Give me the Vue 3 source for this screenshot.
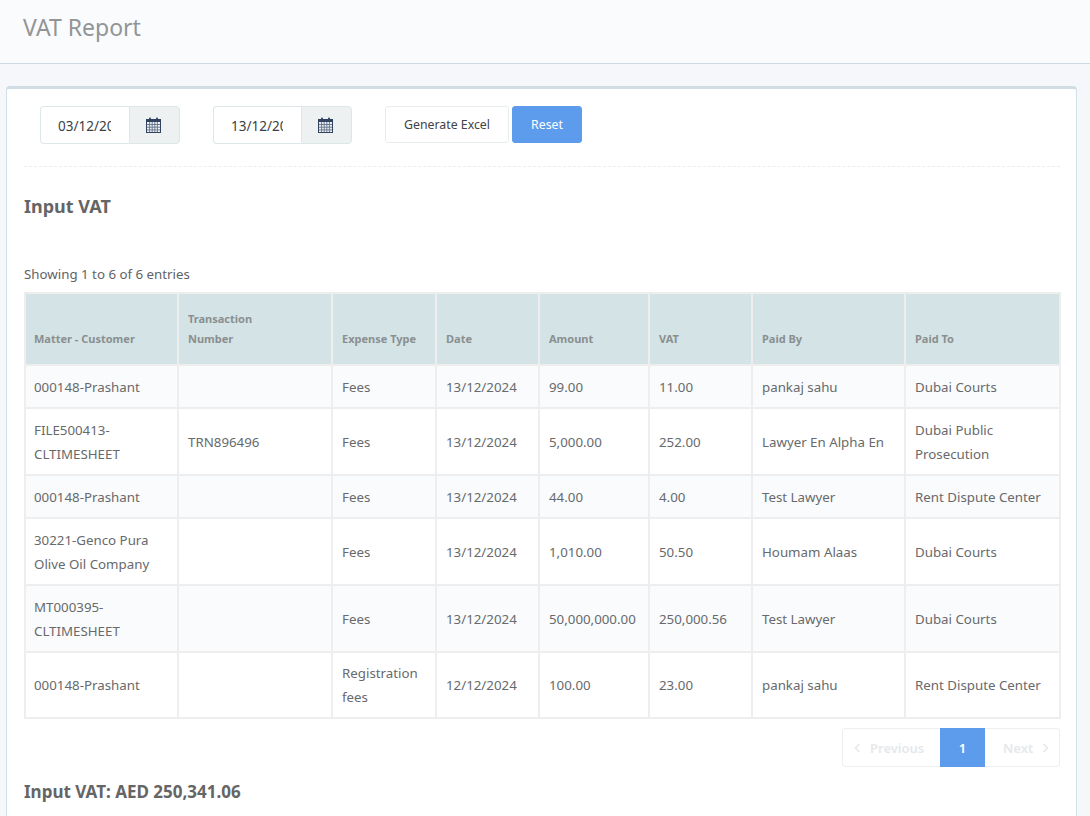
<script setup>
const rows = [
  ['000148-Prashant', '', 'Fees', '13/12/2024', '99.00', '11.00', 'pankaj sahu', 'Dubai Courts'],
  ['FILE500413-CLTIMESHEET', 'TRN896496', 'Fees', '13/12/2024', '5,000.00', '252.00', 'Lawyer En Alpha En', 'Dubai Public Prosecution'],
  ['000148-Prashant', '', 'Fees', '13/12/2024', '44.00', '4.00', 'Test Lawyer', 'Rent Dispute Center'],
  ['30221-Genco Pura Olive Oil Company', '', 'Fees', '13/12/2024', '1,010.00', '50.50', 'Houmam Alaas', 'Dubai Courts'],
  ['MT000395-CLTIMESHEET', '', 'Fees', '13/12/2024', '50,000,000.00', '250,000.56', 'Test Lawyer', 'Dubai Courts'],
  ['000148-Prashant', '', 'Registration fees', '12/12/2024', '100.00', '23.00', 'pankaj sahu', 'Rent Dispute Center']
]
const heads = ['Matter - Customer', 'Transaction Number', 'Expense Type', 'Date', 'Amount', 'VAT', 'Paid By', 'Paid To']
const dates = ['03/12/2024', '13/12/2024']
</script>

<template>
  <div class="page">
    <header class="top"><h1>VAT Report</h1></header>
    <main class="card">
      <div class="filters">
        <div class="dates">
          <div v-for="d in dates" :key="d" class="date">
            <input class="date-input" :value="d" readonly />
            <span class="date-addon">
              <svg width="15" height="16" viewBox="0 0 15 16">
                <rect x="0.5" y="2.5" width="14" height="13" fill="#eef1f5" stroke="#33435f" />
                <rect x="1" y="3" width="13" height="2" fill="#33435f" />
                <path d="M1 7.5H14M1 10.2H14M1 12.9H14M3.6 5V15M6.2 5V15M8.8 5V15M11.4 5V15" stroke="#6d7b92" stroke-width="1" fill="none" />
                <rect x="3" y="0.5" width="2" height="4" rx="1" fill="#33435f" />
                <rect x="10" y="0.5" width="2" height="4" rx="1" fill="#33435f" />
              </svg>
            </span>
          </div>
        </div>
        <div class="actions">
          <button class="btn btn-light">Generate Excel</button>
          <button class="btn btn-primary">Reset</button>
        </div>
      </div>

      <h2 class="section-title">Input VAT</h2>
      <div class="info">Showing 1 to 6 of 6 entries</div>

      <table class="vat">
        <colgroup>
          <col class="c1" /><col class="c2" /><col class="c3" /><col class="c4" />
          <col class="c5" /><col class="c6" /><col class="c7" /><col class="c8" />
        </colgroup>
        <thead>
          <tr><th v-for="h in heads" :key="h">{{ h }}</th></tr>
        </thead>
        <tbody>
          <tr v-for="(r, i) in rows" :key="i" :class="{ odd: i % 2 === 0 }">
            <td v-for="(c, j) in r" :key="j">{{ c }}</td>
          </tr>
        </tbody>
      </table>

      <nav class="pager">
        <a class="pg pg-prev">
          <svg width="7" height="10" viewBox="0 0 7 10"><path d="M5.5 1L1.5 5L5.5 9" fill="none" stroke="#e4e9ec" stroke-width="1.6" /></svg>
          Previous
        </a>
        <a class="pg pg-cur">1</a>
        <a class="pg pg-next">
          Next
          <svg width="7" height="10" viewBox="0 0 7 10"><path d="M1.5 1L5.5 5L1.5 9" fill="none" stroke="#e4e9ec" stroke-width="1.6" /></svg>
        </a>
      </nav>

      <h2 class="total">Input VAT: AED 250,341.06</h2>
    </main>
  </div>
</template>

<style>
html, body { margin: 0; background: #f5f7fb; overflow: hidden; }
</style>

<style scoped>
.page {
  height: 816px;
  overflow: hidden;
  background: #f5f7fb;
  font-family: "Noto Sans", "Open Sans", sans-serif;
  font-size: 13.3px;
  color: #676a6c;
}
.top {
  height: 63px;
  background: #fafbfd;
  border-bottom: 1px solid #cfdbe3;
  padding-left: 23px;
}
.top h1 {
  margin: 0;
  padding-top: 12px;
  font-size: 23px;
  line-height: 30px;
  font-weight: 400;
  color: #919596;
}
.card {
  margin: 22px 13px 0 6px;
  height: 800px;
  box-sizing: border-box;
  background: #fff;
  border: 1px solid #d3e1ea;
  border-top: 3px solid #d0dde4;
  border-radius: 4px 4px 0 0;
  padding: 17px 16px 0 17px;
}
.filters {
  display: flex;
  height: 60px;
  border-bottom: 1px dashed #eaeeee;
  padding-left: 16px;
}
.dates { display: flex; gap: 33px; }
.date { display: flex; height: 38px; }
.date-input {
  width: 89px;
  height: 38px;
  box-sizing: border-box;
  padding: 2px 18px 0 17px;
  border: 1px solid #dde6e9;
  border-right: 0;
  border-radius: 4px 0 0 4px;
  font: inherit;
  font-size: 13.5px;
  color: #3a3f44;
  background: #fff;
  outline: none;
}
.date:last-child .date-input { width: 88px; }
.date-addon {
  width: 51px;
  height: 38px;
  box-sizing: border-box;
  display: flex;
  align-items: center;
  justify-content: center;
  padding-right: 2px;
  background: #edf1f2;
  border: 1px solid #dde6e9;
  border-radius: 0 4px 4px 0;
}
.actions { display: flex; gap: 3px; margin-left: 33px; }
.btn {
  height: 37px;
  box-sizing: border-box;
  font: inherit;
  font-size: 12.3px;
  border-radius: 3px;
  padding: 0;
}
.btn-light { width: 124px; background: #fff; border: 1px solid #e7edee; color: #3f4346; }
.btn-primary { width: 70px; background: #5d9cec; border: 1px solid #5d9cec; color: #fff; }
.section-title {
  margin: 25px 0 0;
  font-size: 18px;
  line-height: 28px;
  font-weight: 700;
  color: #656565;
}
.info {
  margin-top: 44px;
  line-height: 20px;
  color: #5f6366;
}
.vat {
  margin-top: 8px;
  width: 1035px;
  border-collapse: collapse;
  table-layout: fixed;
  border: 2px solid #eeeeee;
}
.c1 { width: 153px; } .c2 { width: 154px; } .c3 { width: 104px; } .c4 { width: 103px; }
.c5 { width: 110px; } .c6 { width: 103px; } .c7 { width: 153px; } .c8 { width: 155px; }
th, td { border: 2px solid #eeeeee; text-align: left; }
th {
  background: #d4e3e5;
  vertical-align: bottom;
  font-size: 11px;
  line-height: 20px;
  font-weight: 700;
  color: #8a8f90;
  padding: 15px 8px;
}
th + th { padding-left: 9px; }
th:nth-child(2) { padding-right: 40px; }
td { padding: 9px 8px 8px; line-height: 24px; vertical-align: middle; color: #676a6c; }
td + td { padding-left: 9px; }
tbody tr:last-child td { padding-top: 8px; }
tr.odd td { background: #fafbfc; }
.pager {
  display: flex;
  justify-content: flex-end;
  margin-top: 9px;
}
.pg {
  height: 39px;
  box-sizing: border-box;
  display: flex;
  align-items: center;
  font-size: 13px;
  font-weight: 600;
  color: #e4e9ec;
  border: 1px solid #eeeeee;
}
.pg-prev { width: 98px; padding-left: 11px; gap: 9px; border-right: 0; border-radius: 4px 0 0 4px; }
.pg-cur { width: 45px; justify-content: center; background: #5d9cec; border-color: #5d9cec; color: #fff; }
.pg-next { width: 75px; padding-left: 18px; gap: 9px; border-left: 0; border-radius: 0 4px 4px 0; }
.total {
  margin: 11px 0 0;
  font-size: 17px;
  line-height: 28px;
  font-weight: 700;
  color: #656565;
}
</style>
